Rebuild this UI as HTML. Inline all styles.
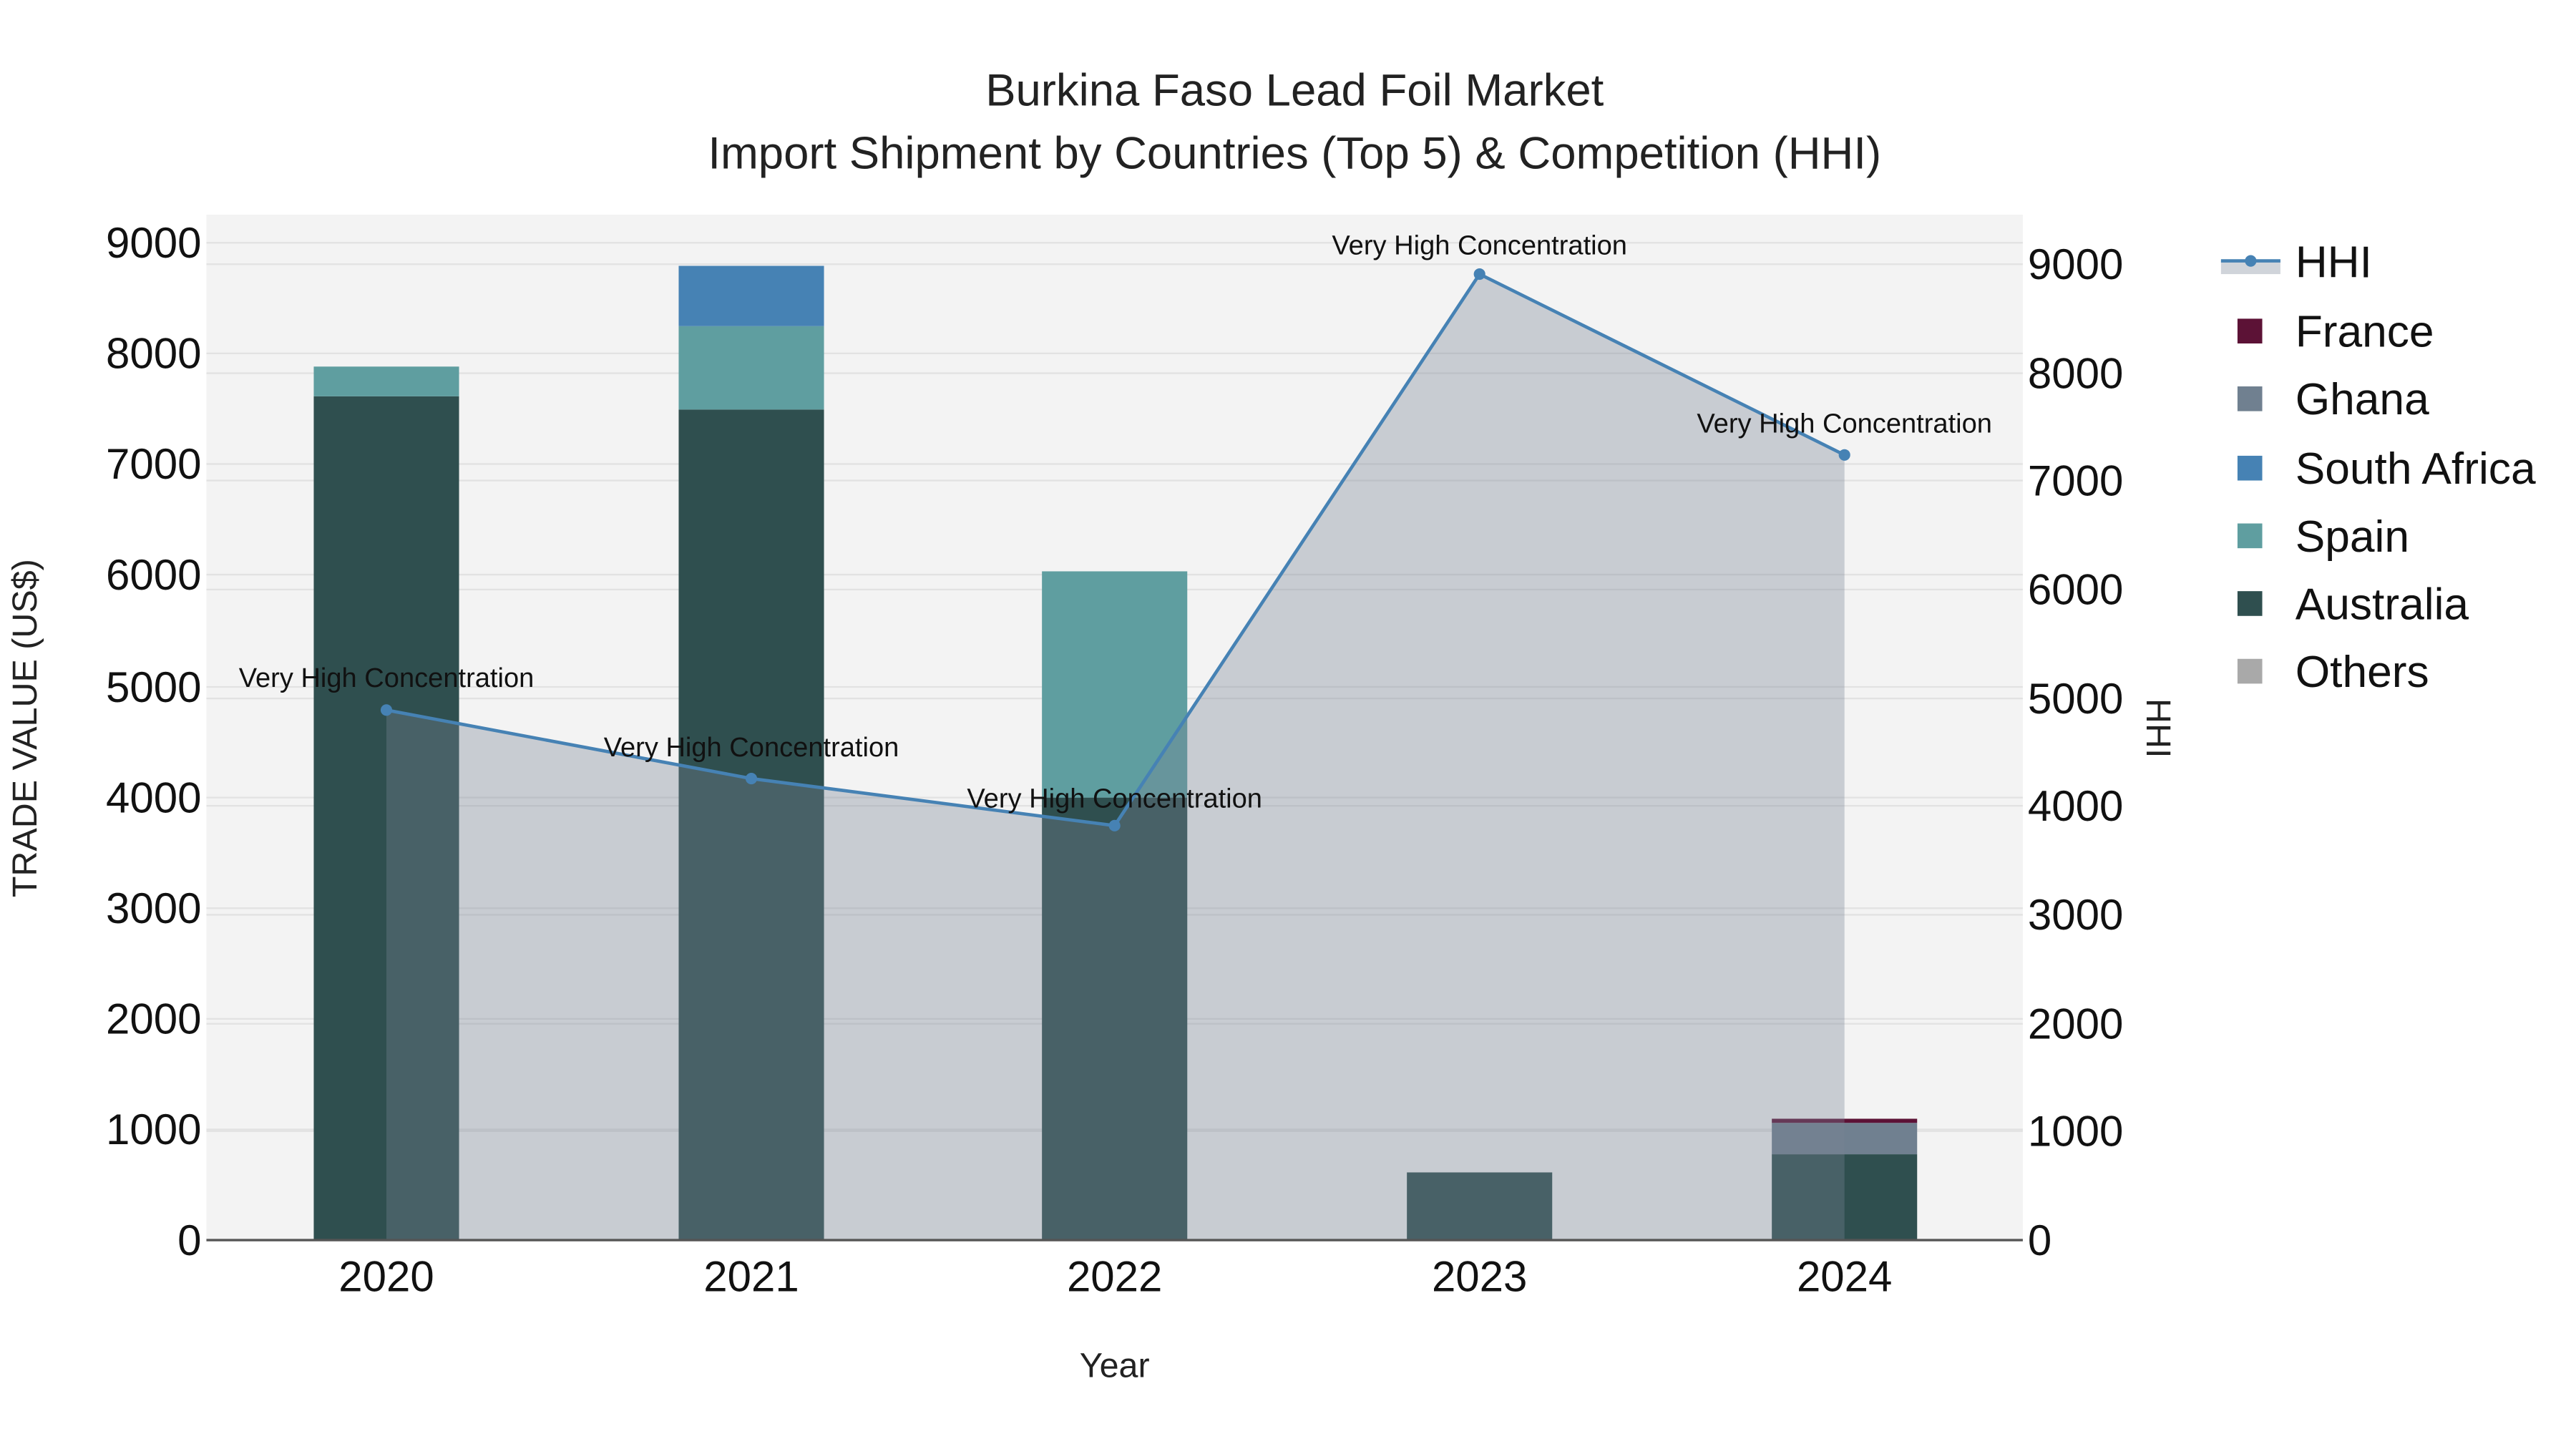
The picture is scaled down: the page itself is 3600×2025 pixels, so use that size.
<!DOCTYPE html>
<html><head><meta charset="utf-8"><style>html,body{margin:0;padding:0;background:#fff}svg{display:block}</style></head>
<body>
<svg width="3600" height="2025" viewBox="0 0 1560 877.5" xmlns="http://www.w3.org/2000/svg" font-family="Liberation Sans, sans-serif">
<rect width="1560" height="877.5" fill="#fff"/>
<rect x="125" y="130" width="1100" height="621" fill="#f3f3f3"/>
<g stroke="#e2e2e2" stroke-width="1">
<line x1="125" x2="1225" y1="684" y2="684"/><line x1="125" x2="1225" y1="617" y2="617"/><line x1="125" x2="1225" y1="550" y2="550"/><line x1="125" x2="1225" y1="483" y2="483"/><line x1="125" x2="1225" y1="416" y2="416"/><line x1="125" x2="1225" y1="348" y2="348"/><line x1="125" x2="1225" y1="281" y2="281"/><line x1="125" x2="1225" y1="214" y2="214"/><line x1="125" x2="1225" y1="147" y2="147"/>
<line x1="125" x2="1225" y1="685" y2="685"/><line x1="125" x2="1225" y1="620" y2="620"/><line x1="125" x2="1225" y1="554" y2="554"/><line x1="125" x2="1225" y1="488" y2="488"/><line x1="125" x2="1225" y1="423" y2="423"/><line x1="125" x2="1225" y1="357" y2="357"/><line x1="125" x2="1225" y1="291" y2="291"/><line x1="125" x2="1225" y1="226" y2="226"/><line x1="125" x2="1225" y1="160" y2="160"/>
</g>
<rect x="190" y="240" width="88" height="511" fill="#2f4f4f"/>
<rect x="190" y="222" width="88" height="18" fill="#5f9ea0"/>
<rect x="411" y="248" width="88" height="503" fill="#2f4f4f"/>
<rect x="411" y="197.5" width="88" height="50.5" fill="#5f9ea0"/>
<rect x="411" y="161" width="88" height="36.5" fill="#4682b4"/>
<rect x="631" y="483" width="88" height="268" fill="#2f4f4f"/>
<rect x="631" y="346" width="88" height="137" fill="#5f9ea0"/>
<rect x="852" y="710" width="88" height="41" fill="#2f4f4f"/>
<rect x="1073" y="699" width="88" height="52" fill="#2f4f4f"/>
<rect x="1073" y="680" width="88" height="19" fill="#708090"/>
<rect x="1073" y="677.5" width="88" height="2.5" fill="#5c1236"/>
<path d="M234,751 L234,430 L455,471.5 L675,500 L896,166 L1117,275.5 L1117,751 Z" fill="rgba(120,131,148,0.35)"/>
<polyline points="234,430 455,471.5 675,500 896,166 1117,275.5" fill="none" stroke="#4682b4" stroke-width="2"/>
<g fill="#4682b4"><circle cx="234" cy="430" r="3.5"/><circle cx="455" cy="471.5" r="3.5"/><circle cx="675" cy="500" r="3.5"/><circle cx="896" cy="166" r="3.5"/><circle cx="1117" cy="275.5" r="3.5"/></g>
<line x1="125" x2="1225" y1="751" y2="751" stroke="#555" stroke-width="1.5"/>
<g font-size="16.5" text-anchor="middle" fill="#111">
<text x="234" y="416">Very High Concentration</text><text x="455" y="458">Very High Concentration</text><text x="675" y="489">Very High Concentration</text><text x="896" y="154">Very High Concentration</text><text x="1117" y="262">Very High Concentration</text>
</g>
<g font-size="26" text-anchor="end" fill="#111">
<text x="122" y="760">0</text><text x="122" y="693">1000</text><text x="122" y="626">2000</text><text x="122" y="559">3000</text><text x="122" y="492">4000</text><text x="122" y="425">5000</text><text x="122" y="357">6000</text><text x="122" y="290">7000</text><text x="122" y="223">8000</text><text x="122" y="156">9000</text>
</g>
<g font-size="26" fill="#111">
<text x="1228" y="760">0</text><text x="1228" y="694">1000</text><text x="1228" y="629">2000</text><text x="1228" y="563">3000</text><text x="1228" y="497">4000</text><text x="1228" y="432">5000</text><text x="1228" y="366">6000</text><text x="1228" y="300">7000</text><text x="1228" y="235">8000</text><text x="1228" y="169">9000</text>
</g>
<g font-size="26" text-anchor="middle" fill="#111">
<text x="234" y="782">2020</text><text x="455" y="782">2021</text><text x="675" y="782">2022</text><text x="896" y="782">2023</text><text x="1117" y="782">2024</text>
</g>
<text x="675" y="834" font-size="21" text-anchor="middle" fill="#222">Year</text>
<text transform="translate(22,441) rotate(-90)" font-size="21" text-anchor="middle" fill="#222">TRADE VALUE (US$)</text>
<text transform="translate(1300,441) rotate(90)" font-size="21" text-anchor="middle" fill="#222">HHI</text>
<text x="784" y="64" font-size="27.5" text-anchor="middle" fill="#222">Burkina Faso Lead Foil Market</text>
<text x="784" y="102" font-size="27.5" text-anchor="middle" fill="#222">Import Shipment by Countries (Top 5) &amp; Competition (HHI)</text>
<rect x="1345" y="158" width="36" height="8" fill="rgba(120,131,148,0.35)"/>
<line x1="1345" x2="1381" y1="158" y2="158" stroke="#4682b4" stroke-width="2"/>
<circle cx="1363" cy="158" r="3.5" fill="#4682b4"/>
<rect x="1355" y="193" width="15" height="15" fill="#5c1236"/>
<rect x="1355" y="234" width="15" height="15" fill="#708090"/>
<rect x="1355" y="276" width="15" height="15" fill="#4682b4"/>
<rect x="1355" y="317" width="15" height="15" fill="#5f9ea0"/>
<rect x="1355" y="358" width="15" height="15" fill="#2f4f4f"/>
<rect x="1355" y="399" width="15" height="15" fill="#a9a9a9"/>
<g font-size="27" fill="#111">
<text x="1390" y="168">HHI</text><text x="1390" y="210">France</text><text x="1390" y="251">Ghana</text><text x="1390" y="293">South Africa</text><text x="1390" y="334">Spain</text><text x="1390" y="375">Australia</text><text x="1390" y="416">Others</text>
</g>
</svg>
</body></html>
